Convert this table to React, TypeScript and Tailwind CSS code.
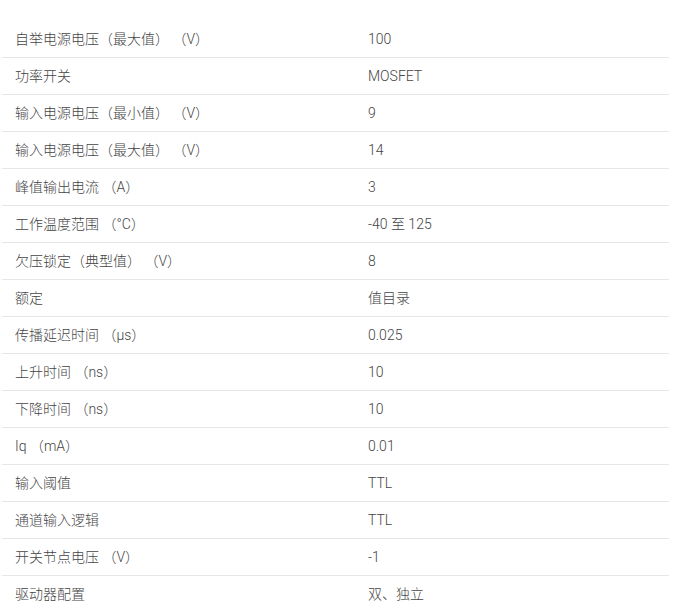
import React from "react";

const rows: [string, string][] = [
  ["自举电源电压（最大值） （V）", "100"],
  ["功率开关", "MOSFET"],
  ["输入电源电压（最小值） （V）", "9"],
  ["输入电源电压（最大值） （V）", "14"],
  ["峰值输出电流 （A）", "3"],
  ["工作温度范围 （°C）", "-40 至 125"],
  ["欠压锁定（典型值） （V）", "8"],
  ["额定", "值目录"],
  ["传播延迟时间 （µs）", "0.025"],
  ["上升时间 （ns）", "10"],
  ["下降时间 （ns）", "10"],
  ["Iq （mA）", "0.01"],
  ["输入阈值", "TTL"],
  ["通道输入逻辑", "TTL"],
  ["开关节点电压 （V）", "-1"],
  ["驱动器配置", "双、独立"],
];

export default function App() {
  return (
    <div
      className="w-[680px] h-[612px] overflow-hidden bg-white pt-[21px] pl-[2px]"
      style={{ fontFamily: 'Roboto, "Noto Sans CJK SC", sans-serif' }}
    >
      <div className="w-[667px] flex flex-col">
        {rows.map(([k, v], i) => (
          <div
            key={i}
            className="h-[37px] shrink-0 flex items-center border-b border-[#e6e6e6] text-[14px] font-light text-[#444444]"
          >
            <div className="w-[353px] pl-[13px] whitespace-pre">{k}</div>
            <div className="pl-[13px] whitespace-pre">{v}</div>
          </div>
        ))}
      </div>
    </div>
  );
}
